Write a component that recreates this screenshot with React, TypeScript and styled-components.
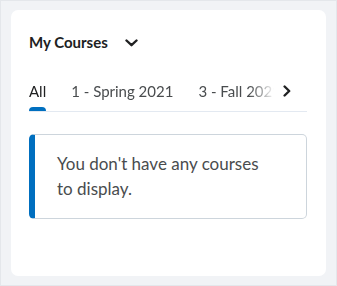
import React from "react";
import styled, { createGlobalStyle } from "styled-components";

const GlobalStyle = createGlobalStyle`
  html, body {
    margin: 0;
    padding: 0;
    background: #f1f3f6;
    font-family: Lato, "Noto Sans", sans-serif;
  }
`;

const tabs = ["All", "1 - Spring 2021", "3 - Fall 2021"];

const App = () => {
  return (
    <>
      <GlobalStyle />
      <Page>
        <Card>
          <TitleRow>
            <Title>My Courses</Title>
            <IconButton aria-label="Open menu">
              <svg width="13" height="8" viewBox="0 0 13 8">
                <path
                  d="M1.5 1.5 L6.5 6.2 L11.5 1.5"
                  fill="none"
                  stroke="#202122"
                  strokeWidth="2.4"
                  strokeLinecap="round"
                  strokeLinejoin="round"
                />
              </svg>
            </IconButton>
          </TitleRow>
          <TabBar>
            <TabStrip>
              {tabs.map((t, i) => (
                <Tab key={t} selected={i === 0}>
                  {t}
                </Tab>
              ))}
            </TabStrip>
            <ScrollButton aria-label="Scroll right">
              <svg width="8" height="12" viewBox="0 0 8 12">
                <path
                  d="M1.6 1.5 L6.2 6 L1.6 10.5"
                  fill="none"
                  stroke="#202122"
                  strokeWidth="2.4"
                  strokeLinecap="round"
                  strokeLinejoin="round"
                />
              </svg>
            </ScrollButton>
          </TabBar>
          <Alert>You don't have any courses to display.</Alert>
        </Card>
      </Page>
    </>
  );
};

export default App;

const Page = styled.div`
  box-sizing: border-box;
  min-height: 100vh;
  display: flex;
  flex-direction: column;
  padding: 9px 10px;
  border: 1px solid #e4e7eb;
`;

const Card = styled.div`
  flex: 1;
  background: #ffffff;
  border-radius: 7px;
  padding: 21px 19px 0 18px;
`;

const TitleRow = styled.div`
  display: flex;
  align-items: center;
  height: 22px;
`;

const Title = styled.div`
  font-size: 15px;
  font-weight: 700;
  line-height: 22px;
  color: #202122;
`;

const IconButton = styled.button`
  display: flex;
  align-items: center;
  justify-content: center;
  background: none;
  border: none;
  padding: 0;
  margin-left: 17px;
  margin-top: 1px;
`;

const TabBar = styled.div`
  display: flex;
  align-items: flex-start;
  margin-top: 27px;
  border-bottom: 1px solid #e3e9f1;
`;

const TabStrip = styled.div`
  display: flex;
  gap: 25px;
  width: 245px;
  overflow: hidden;
  white-space: nowrap;
  -webkit-mask-image: linear-gradient(to right, #000 220px, transparent 246px);
  mask-image: linear-gradient(to right, #000 220px, transparent 246px);
`;

const Tab = styled.div<{ selected: boolean }>`
  position: relative;
  flex: none;
  font-size: 15px;
  line-height: 22px;
  padding-bottom: 9px;
  color: ${(p) => (p.selected ? "#202122" : "#494c4e")};
  &::after {
    content: "";
    display: ${(p) => (p.selected ? "block" : "none")};
    position: absolute;
    left: 0;
    right: 0;
    bottom: 0;
    height: 4px;
    border-radius: 4px 4px 0 0;
    background: #006fbf;
  }
`;

const ScrollButton = styled.button`
  display: flex;
  align-items: center;
  justify-content: center;
  background: none;
  border: none;
  padding: 0;
  margin-left: 9px;
  height: 22px;
`;

const Alert = styled.div`
  margin-top: 22px;
  border: 1px solid #cdd5dc;
  border-left: 6px solid #006fbf;
  border-radius: 5px;
  padding: 16px 40px 17px 22px;
  font-size: 17px;
  line-height: 25px;
  color: #494c4e;
`;
